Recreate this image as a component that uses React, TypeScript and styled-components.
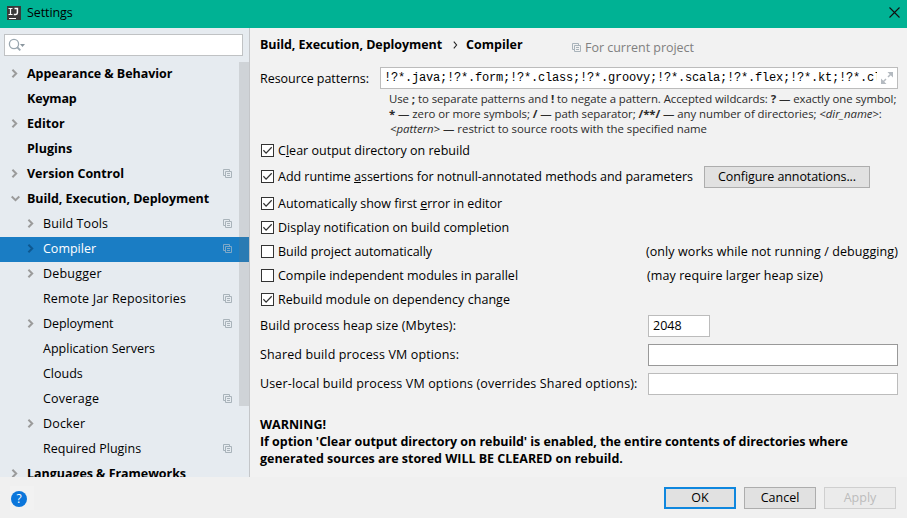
import React from 'react';
import styled, { createGlobalStyle, css } from 'styled-components';

const GlobalStyle = createGlobalStyle`
  * { box-sizing: border-box; }
  body {
    margin: 0;
    font: 12.5px "Open Sans", "Noto Sans", sans-serif;
    font-variant-ligatures: none;
    color: #000;
  }
`;

const Window = styled.div`
  width: 907px;
  height: 518px;
  display: flex;
  flex-direction: column;
  background: #f0f0f0;
  overflow: hidden;
`;

const TitleBar = styled.header`
  height: 28px;
  flex: none;
  display: flex;
  align-items: center;
  padding: 0 7px 3px 7px;
  background: #00b294;
`;

const Text = styled.span<{ $ls?: number }>`
  white-space: pre;
  line-height: 17px;
  letter-spacing: ${p => p.$ls ?? 0}px;
`;

const Bold = styled(Text)`
  font-weight: 700;
`;

const WindowTitle = styled(Text)`
  margin-left: 6px;
  flex: 1;
`;

const Body = styled.div`
  height: 449px;
  flex: none;
  display: flex;
`;

const Sidebar = styled.aside`
  position: relative;
  width: 250px;
  flex: none;
  background: #e6ebf0;
  border-right: 1px solid #c4c6c9;
  overflow: hidden;
`;

const SearchBox = styled.div`
  height: 22px;
  margin: 6px 6px 6px 4px;
  padding: 3px 3px;
  background: #fff;
  border: 1px solid #c0c2c4;
  svg { display: block; }
`;

const TreeRow = styled.div<{ $level: number; $selected?: boolean }>`
  height: 25px;
  display: flex;
  align-items: center;
  padding-right: 16px;
  padding-bottom: 1px;
  padding-left: ${p => (p.$level ? 27 : 11)}px;
  color: #000;
  svg { flex: none; }
  ${p => p.$selected && css`
    background: #1a7dc4;
    color: #fff;
  `}
`;

const ArrowSlot = styled.span`
  width: 16px;
  flex: none;
  display: flex;
  align-items: center;
`;

const RowLabel = styled(Text)<{ $bold?: boolean }>`
  flex: 1;
  padding-bottom: 2px;
  font-weight: ${p => (p.$bold ? 700 : 400)};
`;

const ScrollThumb = styled.div`
  position: absolute;
  top: 34px;
  right: 0;
  width: 10px;
  height: 344px;
  background: rgba(115, 115, 115, 0.2);
`;

const Main = styled.main`
  flex: 1;
  min-width: 0;
  background: #f2f2f2;
  padding: 0 9px 0 10px;
`;

const Breadcrumbs = styled.div`
  height: 39px;
  display: flex;
  align-items: flex-start;
  padding-top: 8px;
  svg { flex: none; }
`;

const Crumb = styled(Bold)<{ $width: number }>`
  width: ${p => p.$width}px;
`;

const CrumbArrow = styled.span`
  display: flex;
  width: 24px;
  padding: 5px 0 0 11px;
`;

const Scope = styled.div`
  display: flex;
  align-items: center;
  gap: 3px;
  padding-top: 3px;
  margin-left: 50px;
  color: #808080;
`;

const PatternsRow = styled.div`
  display: flex;
  align-items: center;
  height: 22px;
`;

const PatternsLabel = styled(Text)`
  width: 120px;
  flex: none;
`;

const PatternsField = styled.div`
  flex: 1;
  min-width: 0;
  height: 22px;
  display: flex;
  align-items: center;
  padding: 0 4px 0 3px;
  background: #fff;
  border: 1px solid #bcbcbc;
  svg { flex: none; margin-left: 4px; }
`;

const PatternsValue = styled.span`
  flex: 1;
  min-width: 0;
  overflow: hidden;
  white-space: pre;
  font: 12px/18px "Liberation Mono", monospace;
  letter-spacing: -0.2px;
`;

const Hint = styled.div`
  height: 45px;
  margin: 2px 0 2px 129px;
  font-size: 11.4px;
  line-height: 15px;
  white-space: pre;
  color: #2b2b2b;
`;

const HintLine = styled.div<{ $ls: number; $indent?: number }>`
  letter-spacing: ${p => p.$ls}px;
  padding-left: ${p => p.$indent ?? 0}px;
`;

const Option = styled.label<{ $height: number; $gap: number }>`
  height: ${p => p.$height}px;
  margin-top: ${p => p.$gap}px;
  display: flex;
  align-items: center;
  padding-left: 1px;
`;

const Box = styled.span`
  width: 13px;
  height: 13px;
  flex: none;
  margin-right: 4px;
  display: flex;
  background: #fff;
  border: 1px solid #333;
`;

const OptionText = styled(Text)<{ $width?: number }>`
  width: ${p => (p.$width ? `${p.$width}px` : 'auto')};
`;

const Field = styled.div<{ $gap: number }>`
  display: flex;
  align-items: flex-start;
  height: 22px;
  margin-top: ${p => p.$gap}px;
`;

const FieldLabel = styled(Text)`
  width: 388px;
  flex: none;
  padding-top: 2px;
`;

const Input = styled.div<{ $width: number; $dark?: boolean }>`
  width: ${p => p.$width}px;
  height: 22px;
  padding: 1px 4px;
  background: #fff;
  border: 1px solid ${p => (p.$dark ? '#999' : '#bcbcbc')};
`;

const Warning = styled.div`
  display: flex;
  flex-direction: column;
  margin-top: 21px;
`;

const Button = styled.button<{ $width: number; $kind?: 'primary' | 'disabled' }>`
  width: ${p => p.$width}px;
  height: 22px;
  padding: 0 0 1px;
  display: flex;
  align-items: center;
  justify-content: center;
  font: inherit;
  color: #000;
  background: #e1e1e1;
  border: 1px solid #adadad;
  border-radius: 0;
  ${p => p.$kind === 'primary' && css`
    border: 2px solid #0f87de;
  `}
  ${p => p.$kind === 'disabled' && css`
    color: #bcbcbc;
    background: #ebebeb;
    border-color: #cfcfcf;
  `}
`;

const ConfigureButton = styled(Button)`
  margin-left: 11px;
`;

const Footer = styled.footer`
  height: 41px;
  flex: none;
  display: flex;
  align-items: flex-start;
  gap: 8px;
  padding: 10px 11px 0 10px;
`;

const HelpSlot = styled.div`
  margin-right: auto;
  width: 24px;
  height: 24px;
  margin-top: -1px;
  padding: 5px 1px;
  background: #f2f2f2;
`;

const HelpBadge = styled.div`
  width: 16px;
  height: 16px;
  border-radius: 50%;
  background: #0b76db;
  color: #fff;
  font-size: 12px;
  line-height: 16px;
  text-align: center;
`;

const Logo = () => (
  <svg width="14" height="14" viewBox="0 0 14 14">
    <rect width="14" height="14" fill="#3a3a3a" />
    <path d="M1.5 2.5h4M3.5 2.5v6M1.5 8.5h4" fill="none" stroke="#fff" strokeWidth="1.2" />
    <path d="M7.5 2.5H10.4v4.3q0 1.7-1.6 1.7H6.8" fill="none" stroke="#fff" strokeWidth="1.5" />
    <path d="M2 12.5h7" stroke="#fff" strokeWidth="1" />
  </svg>
);

const CloseIcon = () => (
  <svg width="11" height="11" viewBox="0 0 11 11">
    <path d="M.5.5l10 10M10.5.5l-10 10" stroke="#111" strokeWidth="1.1" />
  </svg>
);

const SearchIcon = () => (
  <svg width="18" height="14" viewBox="0 0 18 14">
    <circle cx="6" cy="6" r="4.6" fill="none" stroke="#9aa7b0" strokeWidth="1.3" />
    <path d="M9 9l3.3 3.3" stroke="#9aa7b0" strokeWidth="1.8" />
    <path d="M12 6h5l-2.5 3z" fill="#8a969e" />
  </svg>
);

const Arrow = ({ open, selected }: { open?: boolean; selected?: boolean }) =>
  open ? (
    <svg width="10" height="10" viewBox="0 0 10 10">
      <path d="M.7 2.5L4.5 6.2 8.3 2.5" fill="none" stroke="#9b9b9b" strokeWidth="2" />
    </svg>
  ) : (
    <svg width="10" height="10" viewBox="0 0 10 10">
      <path d="M1.4 .7L5.2 4.5 1.4 8.3" fill="none" stroke={selected ? '#0e5890' : '#9b9b9b'} strokeWidth="2" />
    </svg>
  );

const ProjectIcon = ({ tint = '#a9b3ba' }: { tint?: string }) => (
  <svg width="10" height="10" viewBox="0 0 10 10">
    <path d="M3 6.5H.5v-6h6V3" fill="none" stroke={tint} />
    <path d="M2.5 2.5h6v6h-6zM4 4.5h3M4 6.5h3" fill="none" stroke={tint} />
  </svg>
);

const ExpandIcon = () => (
  <svg width="12" height="12" viewBox="0 0 12 12">
    <path d="M6.5 0H12v5.5zM0 6.5V12h5.5z" fill="#b4bac0" />
    <path d="M10 2L7 5M2 10l3-3" stroke="#b4bac0" strokeWidth="1.5" />
  </svg>
);

const CheckMark = () => (
  <svg width="11" height="11" viewBox="0 0 11 11">
    <path d="M1.4 5.3L4.1 8.1 9.7 2.2" fill="none" stroke="#333" strokeWidth="1.25" />
  </svg>
);

type Node = { label: string; level: 0 | 1; ls?: number; arrow?: 'open' | 'closed'; scoped?: boolean; selected?: boolean };

const tree: Node[] = [
  { label: 'Appearance & Behavior', level: 0, ls: -0.05, arrow: 'closed' },
  { label: 'Keymap', level: 0, ls: -0.15 },
  { label: 'Editor', level: 0, arrow: 'closed' },
  { label: 'Plugins', level: 0 },
  { label: 'Version Control', level: 0, arrow: 'closed', scoped: true },
  { label: 'Build, Execution, Deployment', level: 0, ls: -0.06, arrow: 'open' },
  { label: 'Build Tools', level: 1, ls: 0.1, arrow: 'closed', scoped: true },
  { label: 'Compiler', level: 1, arrow: 'closed', scoped: true, selected: true },
  { label: 'Debugger', level: 1, ls: 0.2, arrow: 'closed' },
  { label: 'Remote Jar Repositories', level: 1, ls: 0.155, scoped: true },
  { label: 'Deployment', level: 1, ls: -0.1, arrow: 'closed', scoped: true },
  { label: 'Application Servers', level: 1, ls: 0.015 },
  { label: 'Clouds', level: 1 },
  { label: 'Coverage', level: 1, ls: 0.2, scoped: true },
  { label: 'Docker', level: 1, ls: 0.15, arrow: 'closed' },
  { label: 'Required Plugins', level: 1, scoped: true },
  { label: 'Languages & Frameworks', level: 0, ls: -0.045, arrow: 'closed' },
];

const Check = ({ on }: { on?: boolean }) => <Box>{on && <CheckMark />}</Box>;

export default function App() {
  return (
    <Window>
      <GlobalStyle />
      <TitleBar>
        <Logo />
        <WindowTitle $ls={-0.1}>Settings</WindowTitle>
        <CloseIcon />
      </TitleBar>
      <Body>
        <Sidebar>
          <SearchBox><SearchIcon /></SearchBox>
          {tree.map(n => (
            <TreeRow key={n.label} $level={n.level} $selected={n.selected}>
              <ArrowSlot>{n.arrow && <Arrow open={n.arrow === 'open'} selected={n.selected} />}</ArrowSlot>
              <RowLabel $bold={n.level === 0} $ls={n.ls}>{n.label}</RowLabel>
              {n.scoped && <ProjectIcon tint={n.selected ? '#7fa9c8' : undefined} />}
            </TreeRow>
          ))}
          <ScrollThumb />
        </Sidebar>
        <Main>
          <Breadcrumbs>
            <Crumb $width={182} $ls={-0.06}>Build, Execution, Deployment</Crumb>
            <CrumbArrow>
              <svg width="5" height="8" viewBox="0 0 5 8">
                <path d="M.8.7L3.6 4 .8 7.3" fill="none" stroke="#222" strokeWidth="1.1" />
              </svg>
            </CrumbArrow>
            <Crumb $width={56}>Compiler</Crumb>
            <Scope>
              <ProjectIcon />
              <Text $ls={-0.025}>For current project</Text>
            </Scope>
          </Breadcrumbs>
          <PatternsRow>
            <PatternsLabel $ls={-0.045}>Resource patterns:</PatternsLabel>
            <PatternsField>
              <PatternsValue>!?*.java;!?*.form;!?*.class;!?*.groovy;!?*.scala;!?*.flex;!?*.kt;!?*.cl</PatternsValue>
              <ExpandIcon />
            </PatternsField>
          </PatternsRow>
          <Hint>
            <HintLine $ls={-0.06}>Use <b>;</b> to separate patterns and <b>!</b> to negate a pattern. Accepted wildcards: <b>?</b> — exactly one symbol;</HintLine>
            <HintLine $ls={-0.06}><b>*</b> — zero or more symbols; <b>/</b> — path separator; <b>/**/</b> — any number of directories; <i>&lt;dir_name&gt;</i>:</HintLine>
            <HintLine $ls={-0.02} $indent={1}><i>&lt;pattern&gt;</i> — restrict to source roots with the specified name</HintLine>
          </Hint>
          <Option $height={25} $gap={0}>
            <Check on /><OptionText $ls={0.02}>C<u>l</u>ear output directory on rebuild</OptionText>
          </Option>
          <Option $height={25} $gap={1}>
            <Check on /><OptionText $width={415} $ls={-0.025}>Add runtime <u>a</u>ssertions for notnull-annotated methods and parameters</OptionText>
            <ConfigureButton $width={166}><Text $ls={-0.085}>Configure annotations...</Text></ConfigureButton>
          </Option>
          <Option $height={23} $gap={3}>
            <Check on /><OptionText $ls={-0.015}>Automatically show first <u>e</u>rror in editor</OptionText>
          </Option>
          <Option $height={23} $gap={1}>
            <Check on /><OptionText>Display notification on build completion</OptionText>
          </Option>
          <Option $height={23} $gap={1}>
            <Check /><OptionText $width={369} $ls={-0.05}>Build project automatically</OptionText>
            <Text $ls={0.095}>(only works while not running / debugging)</Text>
          </Option>
          <Option $height={23} $gap={1}>
            <Check /><OptionText $width={369}>Compile independent modules in parallel</OptionText>
            <Text $ls={0.09}>(may require larger heap size)</Text>
          </Option>
          <Option $height={23} $gap={1}>
            <Check on /><OptionText $ls={0.045}>Rebuild module on dependency change</OptionText>
          </Option>
          <Field $gap={4}>
            <FieldLabel $ls={0.11}>Build process heap size (Mbytes):</FieldLabel>
            <Input $width={62}><Text>2048</Text></Input>
          </Field>
          <Field $gap={7}>
            <FieldLabel $ls={0.14}>Shared build process VM options:</FieldLabel>
            <Input $width={250} $dark />
          </Field>
          <Field $gap={7}>
            <FieldLabel $ls={0.145}>User-local build process VM options (overrides Shared options):</FieldLabel>
            <Input $width={250} />
          </Field>
          <Warning>
            <Bold>WARNING!</Bold>
            <Bold $ls={-0.045}>If option 'Clear output directory on rebuild' is enabled, the entire contents of directories where</Bold>
            <Bold $ls={-0.02}>generated sources are stored WILL BE CLEARED on rebuild.</Bold>
          </Warning>
        </Main>
      </Body>
      <Footer>
        <HelpSlot><HelpBadge>?</HelpBadge></HelpSlot>
        <Button $width={72} $kind="primary">OK</Button>
        <Button $width={72}>Cancel</Button>
        <Button $width={72} $kind="disabled">Apply</Button>
      </Footer>
    </Window>
  );
}
